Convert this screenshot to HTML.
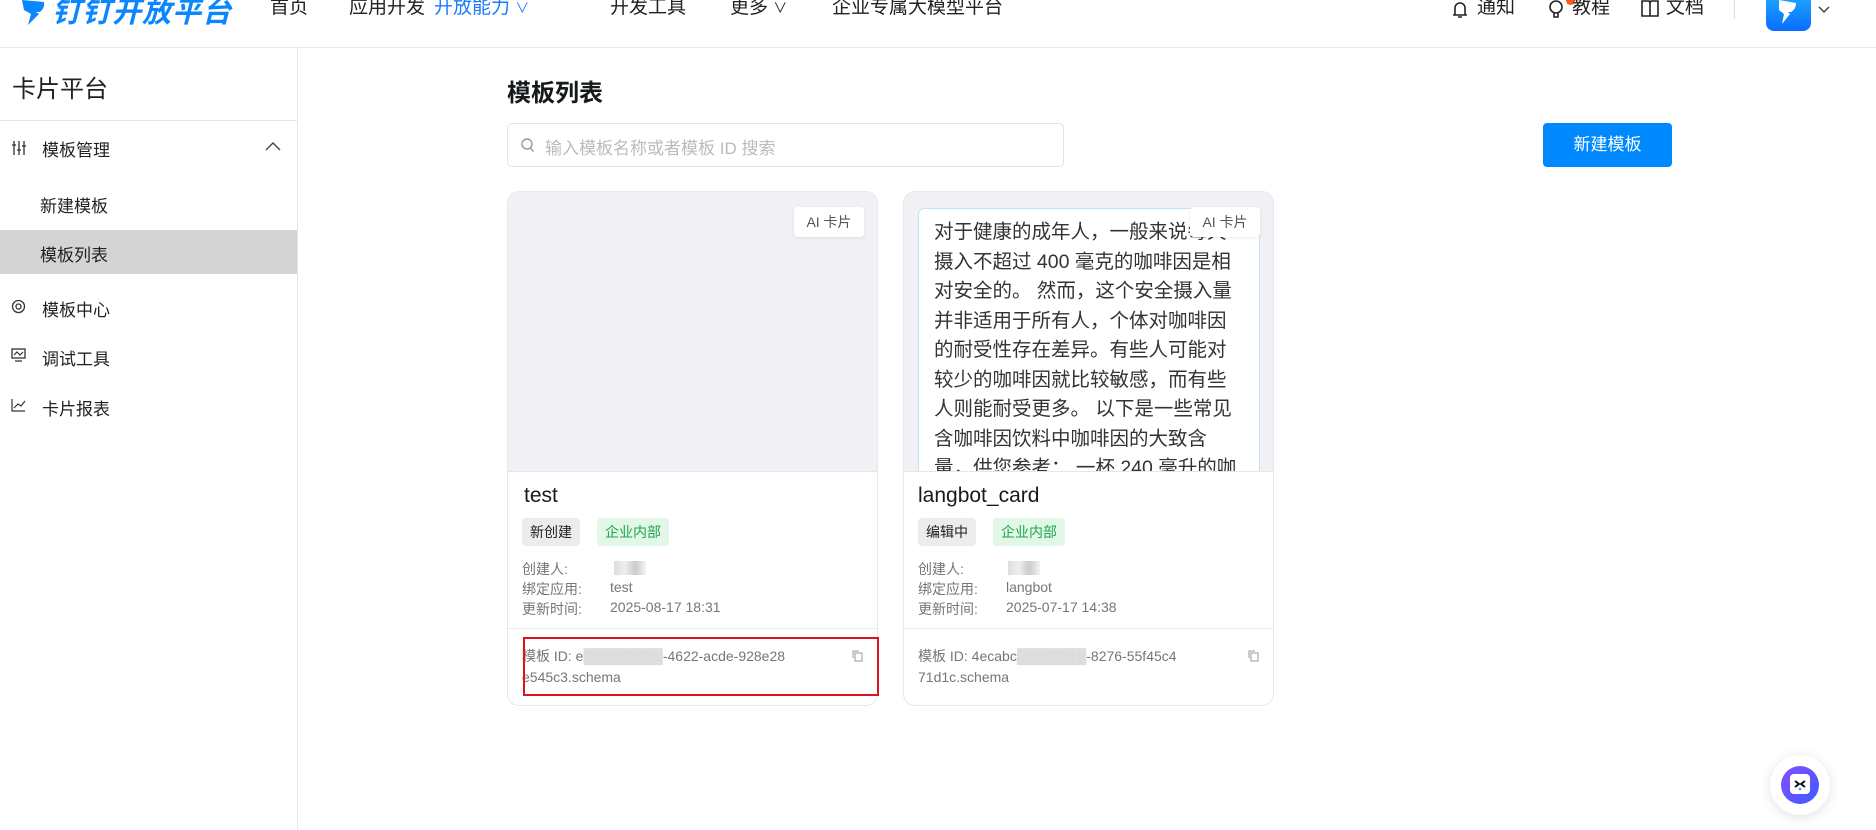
<!DOCTYPE html>
<html><head><meta charset="utf-8"><style>
*{margin:0;padding:0;box-sizing:border-box}
body{width:1876px;height:830px;overflow:hidden;background:#fff;font-family:"Liberation Sans","Noto Sans CJK SC",sans-serif;color:#171a1d;position:relative}
.a{position:absolute;white-space:nowrap}
.nav{font-size:19px;top:-4px;line-height:24px;color:#222}
.side{font-size:17px;color:#222}
.meta{font-size:14px;color:#747677}
.tag{position:absolute;height:28px;line-height:28px;font-size:14px;border-radius:4px;padding:0 8px}
.card{position:absolute;top:191px;width:371px;height:515px;border:1px solid #e8e8ec;border-radius:12px;overflow:hidden;background:#fff}
.prev{position:absolute;left:0;top:0;width:100%;height:280px;background:#f1f1f5;border-bottom:1px solid #e5e5ea;overflow:hidden}
.ai{position:absolute;right:13px;top:15px;width:70px;height:30px;background:#fff;border-radius:4px;font-size:14px;color:#555;text-align:center;line-height:30px;box-shadow:0 1px 3px rgba(0,0,0,.08)}
</style></head><body>
<!-- header -->
<div style="position:absolute;left:0;top:47px;width:1876px;height:1px;background:#e8e8e8"></div>
<svg class="a" style="left:20px;top:0" width="28" height="26" viewBox="0 0 28 26"><path d="M2 0 L24 2 Q25 8 20 12 L16 12 L19 14 L8 25 L11 14 L4 10 Z" fill="#0a86ff"/></svg>
<div class="a" style="left:52px;top:-11px;font-size:29px;font-weight:bold;font-style:italic;color:#0a86ff;letter-spacing:1px">钉钉开放平台</div>
<div class="a nav" style="left:270px">首页</div>
<div class="a nav" style="left:349px">应用开发</div>
<div class="a nav" style="left:434px;color:#1a7cff">开放能力 <span style="font-size:14px">∨</span></div>
<div class="a nav" style="left:610px">开发工具</div>
<div class="a nav" style="left:730px">更多 <span style="font-size:14px">∨</span></div>
<div class="a nav" style="left:832px">企业专属大模型平台</div>
<svg class="a" style="left:1452px;top:0" width="16" height="19" viewBox="0 0 16 19"><path d="M3 15V8a5 5 0 0 1 10 0v7h2H1z M6 17h4" fill="none" stroke="#222" stroke-width="1.6"/></svg>
<div class="a nav" style="left:1477px">通知</div>
<svg class="a" style="left:1548px;top:0" width="16" height="19" viewBox="0 0 16 19"><circle cx="8" cy="7" r="6" fill="none" stroke="#222" stroke-width="1.6"/><path d="M6 13v4h4v-4" fill="none" stroke="#222" stroke-width="1.6"/></svg>
<div class="a" style="left:1566px;top:0;width:9px;height:5px;background:#ff5a1f;border-radius:0 0 5px 5px"></div>
<div class="a nav" style="left:1572px">教程</div>
<svg class="a" style="left:1641px;top:0" width="18" height="19" viewBox="0 0 18 19"><path d="M1 1h7l1 2 1-2h7v15H1z M9 3v13" fill="none" stroke="#222" stroke-width="1.6"/></svg>
<div class="a nav" style="left:1666px">文档</div>
<div class="a" style="left:1734px;top:0;width:1px;height:19px;background:#ddd"></div>
<div class="a" style="left:1766px;top:0;width:45px;height:31px;border-radius:0 0 8px 8px;background:linear-gradient(#1aa0ff,#0a6cff)"></div>
<svg class="a" style="left:1776px;top:0" width="24" height="26" viewBox="0 0 24 26"><path d="M3 0L20 3Q20 9 15 12L12 12L14 14L6 24L8 14L3 10Z" fill="#fff"/></svg>
<svg class="a" style="left:1818px;top:6px" width="12" height="8" viewBox="0 0 12 8"><path d="M1 1l5 5 5-5" fill="none" stroke="#444" stroke-width="1.5"/></svg>
<!-- sidebar -->
<div class="a" style="left:297px;top:48px;width:1px;height:782px;background:#e8e8e8"></div>
<div class="a" style="left:12px;top:69px;font-size:24px;color:#222">卡片平台</div>
<div class="a" style="left:0;top:120px;width:297px;height:1px;background:#e5e5e5"></div>
<svg class="a" style="left:12px;top:140px" width="14" height="16" viewBox="0 0 14 16"><path d="M2 1v14M7 1v14M12 1v14" stroke="#333" stroke-width="1.3"/><path d="M0 5h4M5 10h4M10 6h4" stroke="#333" stroke-width="1.3"/></svg>
<div class="a side" style="left:42px;top:136px">模板管理</div>
<svg class="a" style="left:265px;top:141px" width="16" height="10" viewBox="0 0 16 10"><path d="M1 9l7-7 7 7" fill="none" stroke="#444" stroke-width="1.4"/></svg>
<div class="a side" style="left:40px;top:192px">新建模板</div>
<div class="a" style="left:0;top:230px;width:297px;height:44px;background:#d4d4d4"></div>
<div class="a side" style="left:40px;top:241px">模板列表</div>
<svg class="a" style="left:11px;top:299px" width="15" height="15" viewBox="0 0 15 15"><circle cx="7.5" cy="7.5" r="6" fill="none" stroke="#333" stroke-width="1.3"/><circle cx="7.5" cy="7.5" r="2.5" fill="none" stroke="#333" stroke-width="1.3"/></svg>
<div class="a side" style="left:42px;top:296px">模板中心</div>
<svg class="a" style="left:11px;top:348px" width="15" height="14" viewBox="0 0 15 14"><rect x="1" y="1" width="13" height="9" fill="none" stroke="#333" stroke-width="1.3"/><path d="M4 13h7M3 7l3-3 3 3 3-3" fill="none" stroke="#333" stroke-width="1.2"/></svg>
<div class="a side" style="left:42px;top:345px">调试工具</div>
<svg class="a" style="left:11px;top:398px" width="15" height="14" viewBox="0 0 15 14"><path d="M1 1v12h13M3 10l4-4 3 2 4-5" fill="none" stroke="#333" stroke-width="1.2"/></svg>
<div class="a side" style="left:42px;top:395px">卡片报表</div>
<!-- main -->
<div class="a" style="left:507px;top:73px;font-size:24px;font-weight:bold;color:#171a1d">模板列表</div>
<div class="a" style="left:507px;top:123px;width:557px;height:44px;border:1px solid #e3e3e6;border-radius:5px"></div>
<svg class="a" style="left:521px;top:138px" width="14" height="15" viewBox="0 0 14 15"><circle cx="6" cy="6" r="5" fill="none" stroke="#999" stroke-width="1.4"/><path d="M9.5 10l3 3.5" stroke="#999" stroke-width="1.4"/></svg>
<div class="a" style="left:545px;top:134px;font-size:17px;color:#bbb">输入模板名称或者模板 ID 搜索</div>
<div class="a" style="left:1543px;top:123px;width:129px;height:44px;background:#0089ff;border-radius:4px;color:#fff;font-size:17px;text-align:center;line-height:44px">新建模板</div>

<div class="card" style="left:507px">
 <div class="prev"></div><div class="ai">AI 卡片</div>
 <div class="a" style="left:16px;top:292px;font-size:21px">test</div>
 <div class="tag" style="left:14px;top:326px;background:#ececee;color:#222">新创建</div>
 <div class="tag" style="left:89px;top:326px;background:#e3f7e8;color:#1ca649">企业内部</div>
 <div class="a meta" style="left:14px;top:367px">创建人:</div><div class="a" style="left:106px;top:369px;width:32px;height:14px;background:linear-gradient(90deg,#ddd,#eee,#ccc,#f3f3f3)"></div>
 <div class="a meta" style="left:14px;top:387px">绑定应用:</div><div class="a meta" style="left:102px;top:387px">test</div>
 <div class="a meta" style="left:14px;top:407px">更新时间:</div><div class="a meta" style="left:102px;top:407px">2025-08-17 18:31</div>
 <div class="a" style="left:0;top:436px;width:100%;height:1px;background:#ececee"></div>
 <div class="a meta" style="left:14px;top:454px">模板 ID: e<span style="color:#ddd">████████</span>-4622-acde-928e28</div>
 <div class="a meta" style="left:14px;top:477px">e545c3.schema</div>
 <svg class="a" style="left:344px;top:458px" width="11" height="12" viewBox="0 0 11 12"><rect x="3" y="3" width="7" height="8" fill="none" stroke="#999"/><path d="M1 8V1h6" fill="none" stroke="#999"/></svg>
</div>
<div class="a" style="left:523px;top:637px;width:356px;height:59px;border:2px solid #e0101e"></div>

<div class="card" style="left:903px">
 <div class="prev"><div style="position:absolute;left:14px;top:16px;width:342px;height:300px;background:#fff;border:1px solid #bfe3fb;border-radius:6px;padding:9px 0 0 15px;font-size:19.5px;line-height:29.5px;color:#333;white-space:nowrap;overflow:hidden">对于健康的成年人，一般来说每天<br>摄入不超过 400 毫克的咖啡因是相<br>对安全的。 然而，这个安全摄入量<br>并非适用于所有人，个体对咖啡因<br>的耐受性存在差异。有些人可能对<br>较少的咖啡因就比较敏感，而有些<br>人则能耐受更多。 以下是一些常见<br>含咖啡因饮料中咖啡因的大致含<br>量，供您参考： 一杯 240 毫升的咖</div></div>
 <div class="ai">AI 卡片</div>
 <div class="a" style="left:14px;top:292px;font-size:21px">langbot_card</div>
 <div class="tag" style="left:14px;top:326px;background:#ececee;color:#222">编辑中</div>
 <div class="tag" style="left:89px;top:326px;background:#e3f7e8;color:#1ca649">企业内部</div>
 <div class="a meta" style="left:14px;top:367px">创建人:</div><div class="a" style="left:104px;top:369px;width:32px;height:14px;background:linear-gradient(90deg,#ddd,#eee,#ccc,#f3f3f3)"></div>
 <div class="a meta" style="left:14px;top:387px">绑定应用:</div><div class="a meta" style="left:102px;top:387px">langbot</div>
 <div class="a meta" style="left:14px;top:407px">更新时间:</div><div class="a meta" style="left:102px;top:407px">2025-07-17 14:38</div>
 <div class="a" style="left:0;top:436px;width:100%;height:1px;background:#ececee"></div>
 <div class="a meta" style="left:14px;top:454px">模板 ID: 4ecabc<span style="color:#ddd">███████</span>-8276-55f45c4</div>
 <div class="a meta" style="left:14px;top:477px">71d1c.schema</div>
 <svg class="a" style="left:344px;top:458px" width="11" height="12" viewBox="0 0 11 12"><rect x="3" y="3" width="7" height="8" fill="none" stroke="#999"/><path d="M1 8V1h6" fill="none" stroke="#999"/></svg>
</div>
<!-- float -->
<div class="a" style="left:1770px;top:755px;width:60px;height:60px;border-radius:50%;background:#fff;box-shadow:0 2px 12px rgba(0,0,0,.12)"></div>
<div class="a" style="left:1781px;top:766px;width:38px;height:38px;border-radius:50%;background:linear-gradient(135deg,#8a4dff,#3a5bff)"></div>
<div class="a" style="left:1790px;top:774px;width:20px;height:20px;border-radius:4px;background:#fff"></div>
<svg class="a" style="left:1790px;top:774px" width="20" height="20" viewBox="0 0 20 20"><path d="M5 7l4 3-4 3M15 7l-4 3 4 3" fill="none" stroke="#111" stroke-width="2"/><circle cx="10" cy="15" r="1.3" fill="#2aa0ff"/></svg>
</body></html>
